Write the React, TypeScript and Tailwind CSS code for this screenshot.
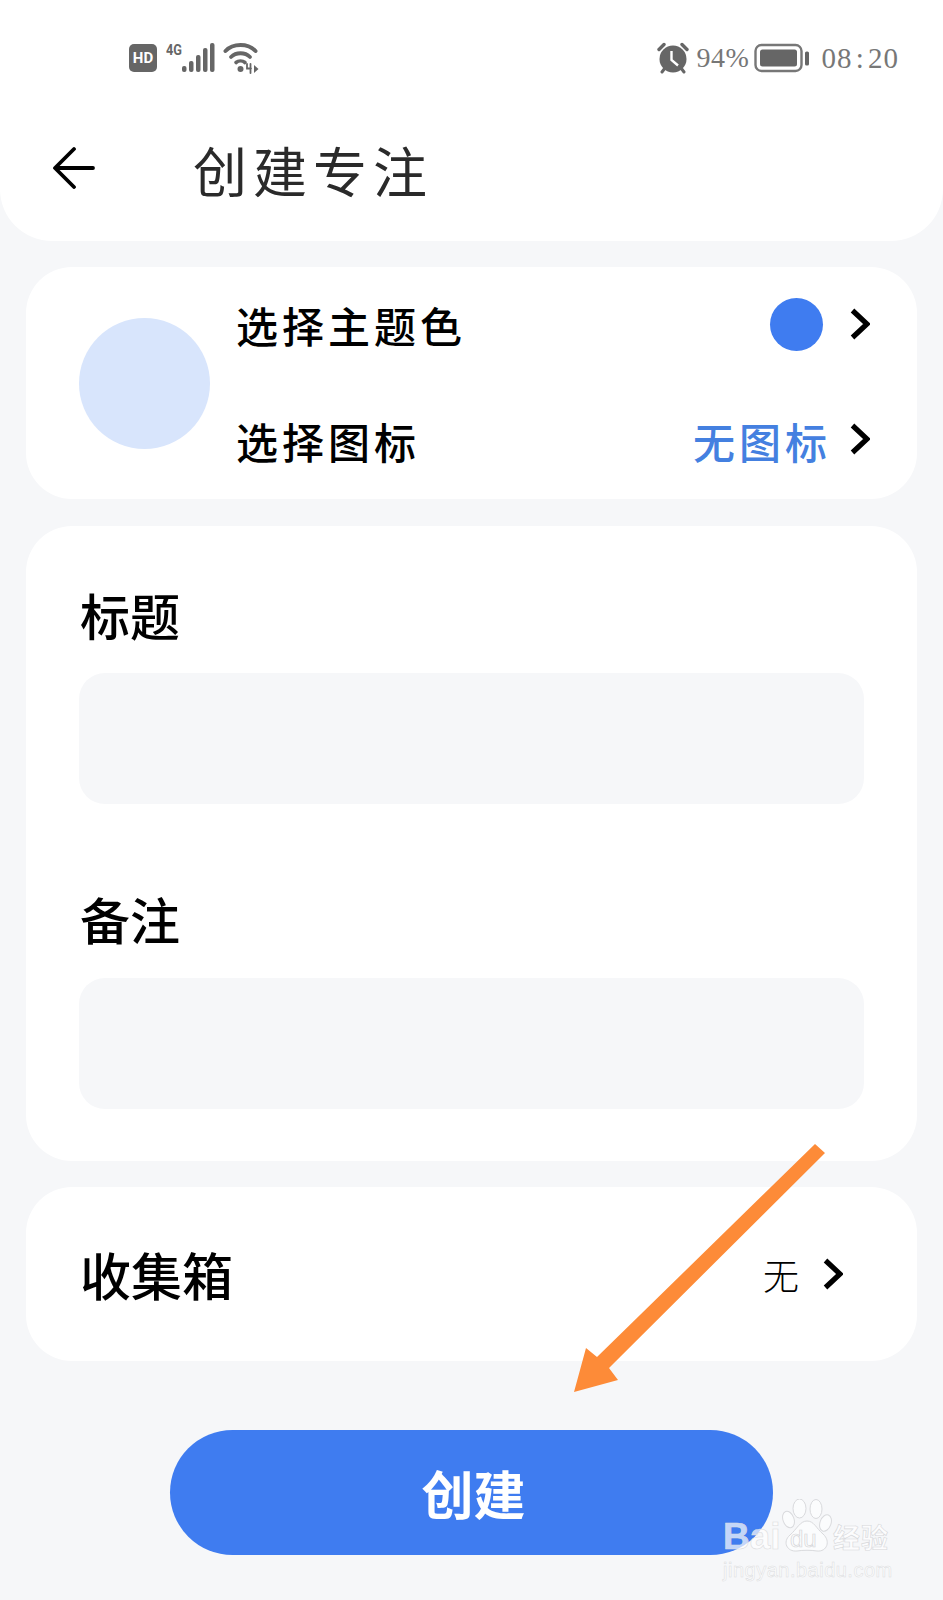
import React from "react";

const cjk = "font-['Noto_Sans_CJK_SC','Noto_Sans_CJK_JP',sans-serif]";

function Chevron({ className = "" }: { className?: string }) {
  return (
    <svg className={className} width="20" height="32" viewBox="0 0 20 32" fill="none">
      <path d="M2.5 2.5 L17 16 L2.5 29.5" stroke="#000" strokeWidth="5.2" strokeLinejoin="miter" />
    </svg>
  );
}

function StatusLeft() {
  return (
    <div className="flex items-start">
      <div className="mt-[2px] flex h-[28px] w-[28px] items-center justify-center rounded-[5px] bg-[#666666] font-['Roboto',sans-serif] text-[15px] font-bold leading-none text-white">
        HD
      </div>
      <svg className="ml-[9px]" width="51" height="31" viewBox="0 0 51 31" fill="#666666">
        <text x="0" y="13" fontFamily="Roboto, sans-serif" fontWeight="700" fontSize="15" textLength="16" lengthAdjust="spacingAndGlyphs">4G</text>
        <rect x="16" y="24" width="4.5" height="6" rx="2" />
        <rect x="23" y="19" width="4.5" height="11" rx="2" />
        <rect x="30" y="13" width="4.5" height="17" rx="2" />
        <rect x="37" y="6" width="4.5" height="24" rx="2" />
        <rect x="44" y="1" width="4.5" height="29" rx="2" />
      </svg>
      <svg className="ml-[6px]" width="37" height="32" viewBox="0 0 37 32" fill="none" stroke="#666666" strokeLinecap="round">
        <path d="M2.5 9 C10 1 25 1 32.5 9" strokeWidth="4" />
        <path d="M8 15 C13 10 22 10 27 15" strokeWidth="3.8" />
        <path d="M13 20.5 C15.5 18.5 19.5 18.5 22 20.5" strokeWidth="3.6" />
        <circle cx="17.5" cy="27" r="3" fill="#666666" stroke="none" />
        <path d="M27.5 22 v9 M24 22 v4.5 h4" strokeWidth="1.8" />
        <path d="M31 23 l4.5 4 l-4.5 4 z" fill="#666666" stroke="none" />
      </svg>
    </div>
  );
}

function StatusRight() {
  return (
    <div className="flex items-center font-['Liberation_Serif',serif] text-[#777777]">
      <svg width="32" height="32" viewBox="0 0 32 32">
        <circle cx="16" cy="17" r="13.5" fill="#666666" />
        <path d="M2 7.5 L7 2.5 M30 7.5 L25 2.5" stroke="#666666" strokeWidth="3.4" strokeLinecap="round" />
        <path d="M5 30 L8 26 M27 30 L24 26" stroke="#666666" strokeWidth="3" strokeLinecap="round" />
        <path d="M14.5 9 V18 L21 23.5" stroke="#fff" strokeWidth="2.4" fill="none" />
      </svg>
      <span className="ml-[8px] text-[28px] leading-none tracking-[0.5px]">94%</span>
      <svg className="ml-[5px]" width="56" height="30" viewBox="0 0 56 30">
        <rect x="1.5" y="2" width="46" height="26" rx="6" fill="none" stroke="#777777" strokeWidth="2.4" />
        <rect x="6" y="6.5" width="37" height="17" rx="2.5" fill="#666666" />
        <rect x="51" y="8.5" width="4" height="14" rx="1.6" fill="#666666" />
      </svg>
      <span className="ml-[11px] text-[29px] leading-none tracking-[1px] [word-spacing:-5px]">08 : 20</span>
    </div>
  );
}

function Field({ label, top, gap }: { label: string; top: string; gap: string }) {
  return (
    <div className={top}>
      <div className="pl-[1px] text-[50px] font-medium leading-[60px] text-black">{label}</div>
      <div className={`${gap} h-[131px] rounded-[26px] bg-[#f6f7f9]`} />
    </div>
  );
}

function Watermark() {
  return (
    <div className="pointer-events-none absolute left-[722px] top-[1498px] h-[84px] w-[180px]">
      <svg className="absolute left-[60px] top-[1px]" width="50" height="55" viewBox="0 0 50 55" fill="#ffffff" fillOpacity="0.6" stroke="#d9dadd" strokeWidth="1">
        <ellipse cx="6.5" cy="20.5" rx="5.5" ry="8.5" transform="rotate(-20 6.5 20.5)" />
        <ellipse cx="17.5" cy="9.5" rx="6.5" ry="9.5" />
        <ellipse cx="34" cy="10" rx="6" ry="9.5" />
        <ellipse cx="43.5" cy="24" rx="5.5" ry="8.5" transform="rotate(20 43.5 24)" />
        <path d="M25 22 C32 22 34 29 41 35 C49 42 45 53 35 52 C29 51 21 51 15 52 C5 53 0 43 8 36 C15 30 18 22 25 22 Z" />
      </svg>
      <div className="absolute left-[1px] top-[20px] font-['Liberation_Sans',sans-serif] text-[37px] font-bold leading-[38px] text-[#ffffff]/70 [-webkit-text-stroke:0.6px_#dcdde0]">
        Bai
      </div>
      <div className="absolute left-[68px] top-[29px] font-['Liberation_Sans',sans-serif] text-[24px] leading-[24px] text-[#ffffff]/70 [-webkit-text-stroke:0.7px_#d4d5d8]">
        du
      </div>
      <div className={`absolute left-[111px] top-[23px] text-[27px] font-bold leading-[32px] tracking-[1px] text-[#ffffff]/70 [-webkit-text-stroke:0.6px_#d6d7da] ${cjk}`}>
        经验
      </div>
      <div className="absolute left-[1px] top-[60px] whitespace-nowrap font-['Liberation_Sans',sans-serif] text-[20px] leading-[24px] tracking-[0.5px] text-[#ffffff]/70 [-webkit-text-stroke:0.5px_#dcdde0]">
        jingyan.baidu.com
      </div>
    </div>
  );
}

export default function App() {
  return (
    <div className={`relative h-[1600px] w-[943px] overflow-hidden bg-[#f6f7f9] ${cjk}`}>
      <header className="h-[241px] rounded-b-[52px] bg-white">
        <div className="flex h-[100px] items-start justify-between pl-[129px] pr-[44px] pt-[42px]">
          <StatusLeft />
          <StatusRight />
        </div>
        <div className="flex items-center pl-[52px] pt-[38px]">
          <svg className="mb-[6px]" width="44" height="44" viewBox="0 0 44 44" fill="none">
            <path d="M41 23 H4 M22 4 L3 23 L22 42" stroke="#000" strokeWidth="3.8" strokeLinecap="round" strokeLinejoin="round" />
          </svg>
          <h1 className="ml-[97px] text-[54px] font-normal leading-[64px] tracking-[6px] text-[#2a2a2a]">创建专注</h1>
        </div>
      </header>

      <main className="px-[26px]">
        <section className="mt-[26px] flex h-[232px] items-center rounded-[46px] bg-white pl-[53px] pr-[47px]">
          <div className="h-[131px] w-[131px] shrink-0 rounded-full bg-[#d8e5fc]" />
          <div className="ml-[26px] flex flex-1 flex-col gap-[58px]">
            <div className="flex h-[58px] items-center justify-between">
              <span className="text-[42px] font-medium leading-[58px] tracking-[4px] text-black">选择主题色</span>
              <div className="flex items-center">
                <div className="mb-[2px] h-[53px] w-[53px] rounded-full bg-[#3f7cf0]" />
                <Chevron className="ml-[27px] mb-[2px]" />
              </div>
            </div>
            <div className="flex h-[58px] items-center justify-between">
              <span className="text-[42px] font-medium leading-[58px] tracking-[4px] text-black">选择图标</span>
              <div className="flex items-center">
                <span className="text-[42px] font-medium leading-[58px] tracking-[4px] text-[#4480e0]">无图标</span>
                <Chevron className="ml-[19px] mb-[4px]" />
              </div>
            </div>
          </div>
        </section>

        <section className="mt-[27px] h-[635px] rounded-[46px] bg-white px-[53px] pt-[58px]">
          <Field label="标题" top="" gap="mt-[29px]" />
          <Field label="备注" top="mt-[84px]" gap="mt-[30px]" />
        </section>

        <section className="mt-[26px] flex h-[174px] items-center justify-between rounded-[46px] bg-white pl-[54px] pr-[74px]">
          <span className="text-[51px] font-medium leading-[60px] text-black">收集箱</span>
          <div className="flex items-center">
            <span className="text-[36px] font-light leading-[50px] text-black">无</span>
            <Chevron className="ml-[24px]" />
          </div>
        </section>

        <div className="mt-[69px] flex justify-center">
          <button className="h-[125px] w-[603px] rounded-full bg-[#3f7cf0] pl-[4px] text-[52px] font-semibold leading-none text-white">
            创建
          </button>
        </div>
      </main>

      {/* annotation arrow lying over the content */}
      <svg className="pointer-events-none absolute left-0 top-0" width="943" height="1600" viewBox="0 0 943 1600">
        <path d="M815 1144 L825 1153 L609 1368 L618 1380 L574 1392 L586 1348 L597 1357 Z" fill="#fd8b38" />
      </svg>
      <Watermark />
    </div>
  );
}
